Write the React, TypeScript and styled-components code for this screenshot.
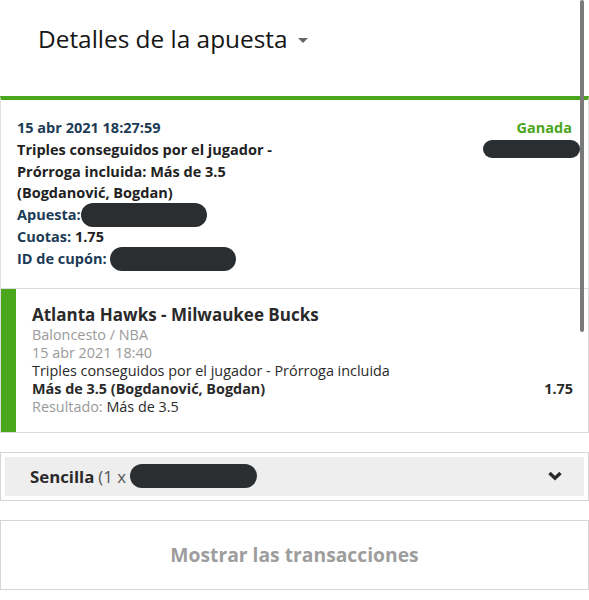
import React from 'react';
import styled, { createGlobalStyle } from 'styled-components';

const GlobalStyle = createGlobalStyle`
  body {
    margin: 0;
    background: #fff;
    font-family: "Open Sans", "Noto Sans", sans-serif;
    color: #222;
  }
`;

const Page = styled.div`
  position: relative;
  width: 589px;
  height: 600px;
  overflow: hidden;
`;

const ScrollThumb = styled.div`
  position: absolute;
  top: 0;
  right: 5px;
  width: 4px;
  height: 332px;
  border-radius: 2px;
  background: #7a7a7a;
`;

const Header = styled.div`
  display: flex;
  align-items: center;
  gap: 10px;
  height: 96px;
  padding-left: 38px;
  box-sizing: border-box;
  font-size: 24.4px;
  color: #151515;
  padding-bottom: 20px;
`;

const Caret = styled.span`
  width: 0;
  height: 0;
  border-left: 5px solid transparent;
  border-right: 5px solid transparent;
  border-top: 5px solid #666;
  margin-top: 4px;
`;

const SummaryCard = styled.div`
  border-top: 4px solid #4aa61d;
  border-left: 1px solid #e2e2e2;
  border-right: 1px solid #e2e2e2;
  padding: 17px 16px 18px 16px;
  display: flex;
  justify-content: space-between;
  font-size: 14.5px;
  font-weight: 700;
  line-height: 21.8px;
`;

const Column = styled.div`
  display: flex;
  flex-direction: column;
`;

const RightColumn = styled(Column)`
  align-items: flex-end;
`;

const Label = styled.span`
  color: #1c3b56;
`;

const Status = styled.span`
  color: #4aa61d;
`;

const Pill = styled.span<{ w: number; h?: number }>`
  display: inline-block;
  width: ${(p) => p.w}px;
  height: ${(p) => p.h ?? 22}px;
  border-radius: 12px;
  background: #2b2e31;
  vertical-align: middle;
`;

const Row = styled.div`
  display: flex;
  align-items: center;
  height: 21.8px;
`;

const EventCard = styled.div`
  display: flex;
  border: 1px solid #dcdcdc;
`;

const GreenBar = styled.div`
  width: 15px;
  background: #4aa61d;
`;

const EventBody = styled.div`
  flex: 1;
  padding: 14px 15px 16px 16px;
  font-size: 14.4px;
  line-height: 18px;
  color: #2a2a2a;
`;

const EventTitle = styled.div`
  font-size: 17px;
  font-weight: 700;
  line-height: 23px;
  margin-bottom: 0;
`;

const Muted = styled.span`
  color: #9a9a9a;
`;

const Selection = styled.div`
  display: flex;
  justify-content: space-between;
  font-weight: 700;
`;

const Spacer = styled.div<{ h: number }>`
  height: ${(p) => p.h}px;
`;

const TypeBox = styled.div`
  border: 1px solid #d6d6d6;
  padding: 4px;
`;

const TypeBar = styled.div`
  display: flex;
  align-items: center;
  justify-content: space-between;
  background: #eeeeee;
  height: 39px;
  padding: 0 22px 0 25px;
  font-size: 16.8px;
  color: #2a2a2a;
`;

const TypeLabel = styled.div`
  display: flex;
  align-items: center;
  gap: 4px;
  b {
    font-weight: 700;
  }
`;

const Light = styled.span`
  color: #555;
`;

const TransButton = styled.div`
  height: 68px;
  border: 1px solid #d6d6d6;
  display: flex;
  align-items: center;
  justify-content: center;
  font-size: 19.3px;
  font-weight: 700;
  color: #9d9d9d;
`;

function Chevron() {
  return (
    <svg width="14" height="10" viewBox="0 0 14 10">
      <path d="M1.5 2 L7 7.2 L12.5 2" stroke="#2a2a2a" strokeWidth="3.4" fill="none" strokeLinejoin="miter" />
    </svg>
  );
}

export default function App() {
  return (
    <Page>
      <GlobalStyle />
      <Header>
        Detalles de la apuesta <Caret />
      </Header>
      <SummaryCard>
        <Column>
          <Label>15 abr 2021 18:27:59</Label>
          <span>Triples conseguidos por el jugador -</span>
          <span>Prórroga incluida: Más de 3.5</span>
          <span>(Bogdanović, Bogdan)</span>
          <Row>
            <Label>Apuesta:</Label>
            <Pill w={126} h={24} />
          </Row>
          <span>
            <Label>Cuotas:</Label> 1.75
          </span>
          <Row>
            <Label>ID de cupón:</Label>&nbsp;
            <Pill w={126} h={24} />
          </Row>
        </Column>
        <RightColumn>
          <Status>Ganada</Status>
          <Pill w={97} h={18} style={{ marginRight: -8, marginTop: 1 }} />
        </RightColumn>
      </SummaryCard>
      <EventCard>
        <GreenBar />
        <EventBody>
          <EventTitle>Atlanta Hawks - Milwaukee Bucks</EventTitle>
          <Muted>Baloncesto / NBA</Muted>
          <br />
          <Muted>15 abr 2021 18:40</Muted>
          <div>Triples conseguidos por el jugador - Prórroga incluida</div>
          <Selection>
            <span>Más de 3.5 (Bogdanović, Bogdan)</span>
            <span>1.75</span>
          </Selection>
          <div>
            <Muted>Resultado:</Muted> Más de 3.5
          </div>
        </EventBody>
      </EventCard>
      <Spacer h={19} />
      <TypeBox>
        <TypeBar>
          <TypeLabel>
            <b>Sencilla</b>
            <Light>(1 x</Light>
            <Pill w={127} h={24} />
          </TypeLabel>
          <Chevron />
        </TypeBar>
      </TypeBox>
      <Spacer h={19} />
      <TransButton>Mostrar las transacciones</TransButton>
      <ScrollThumb />
    </Page>
  );
}
